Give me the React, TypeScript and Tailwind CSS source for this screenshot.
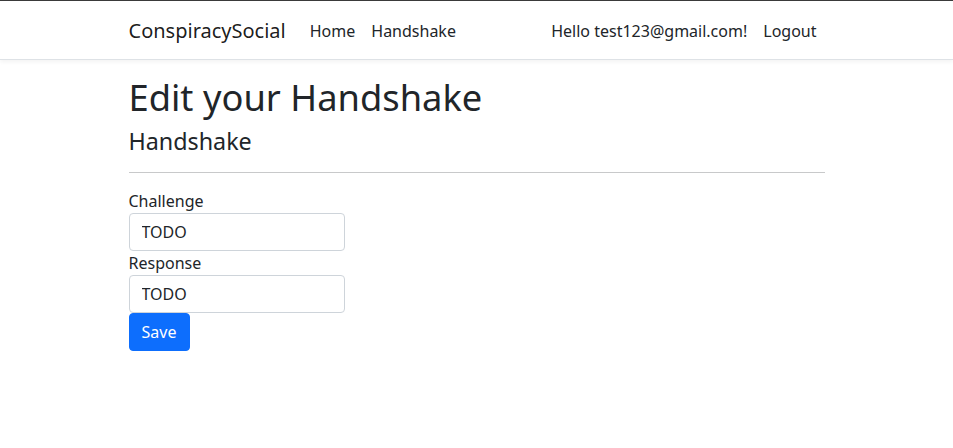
export default function App() {
  return (
    <div className="min-h-[448px] bg-white text-[#212529] text-base leading-6" style={{ fontFamily: '"Noto Sans", "Open Sans", sans-serif' }}>
      <nav className="border-t border-t-[#3a3a3a] border-b border-b-[#dee2e6] bg-white shadow-[0_2px_4px_rgba(0,0,0,0.05)] mb-4">
        <div className="mx-auto w-[720px] px-3 pt-[10px] pb-[8px] flex items-center">
          <a className="text-[20px] leading-[30px] py-[5px] mr-4 text-[rgba(0,0,0,0.9)]">ConspiracySocial</a>
          <ul className="flex flex-1">
            <li><a className="block px-2 py-2 text-[#212529]">Home</a></li>
            <li><a className="block px-2 py-2 text-[#212529]">Handshake</a></li>
          </ul>
          <ul className="flex">
            <li><span className="block px-2 py-2 text-[#212529]">Hello test123@gmail.com!</span></li>
            <li><a className="block px-2 py-2 text-[#212529]">Logout</a></li>
          </ul>
        </div>
      </nav>
      <main className="mx-auto w-[720px] px-3">
        <h1 className="text-[36.3px] leading-[1.2] font-normal mb-2">Edit your Handshake</h1>
        <h4 className="text-[23.3px] leading-[1.2] font-normal mb-2">Handshake</h4>
        <hr className="my-4 border-t border-[#c8c9ca]" />
        <div className="w-[216px]">
          <label className="block">Challenge</label>
          <input className="block w-full h-[38px] px-3 border border-[#ced4da] rounded-[4px] text-[#212529] outline-none" defaultValue="TODO" />
          <label className="block">Response</label>
          <input className="block w-full h-[38px] px-3 border border-[#ced4da] rounded-[4px] text-[#212529] outline-none" defaultValue="TODO" />
          <button className="block h-[38px] w-[61px] rounded-[4px] bg-[#0d6efd] text-white border border-[#0d6efd]">Save</button>
        </div>
      </main>
    </div>
  )
}
